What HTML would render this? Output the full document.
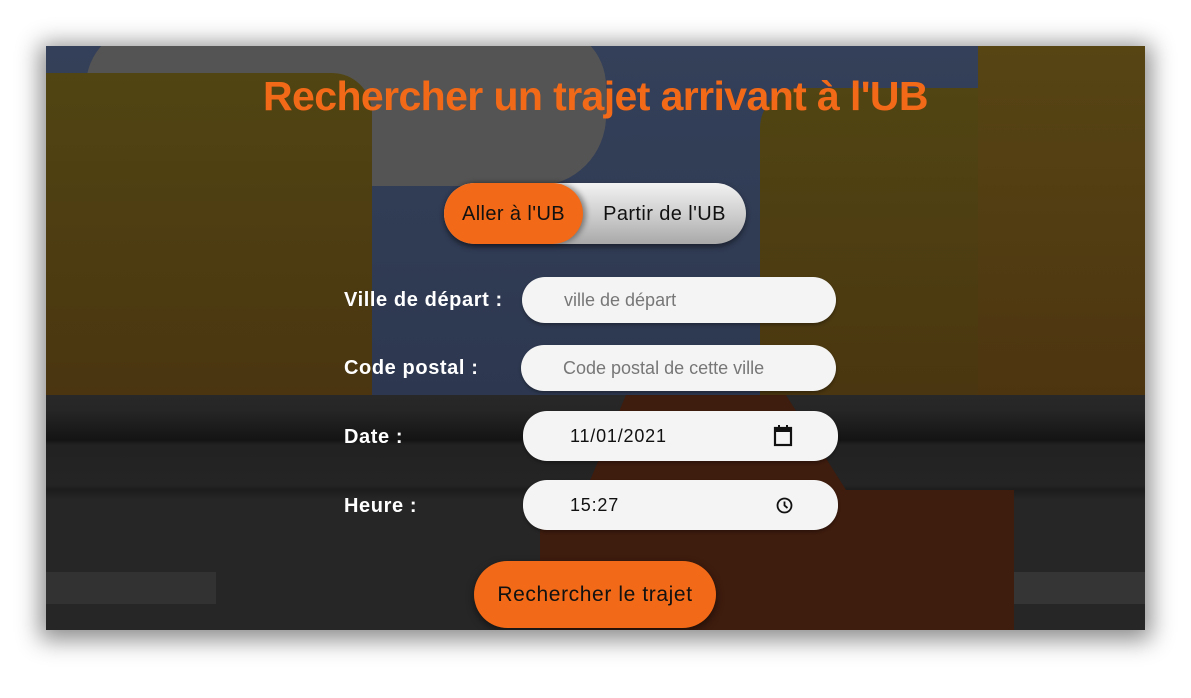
<!DOCTYPE html>
<html><head><meta charset="utf-8"><style>
*{margin:0;padding:0;box-sizing:border-box}
body{width:1191px;height:698px;background:#fff;position:relative;overflow:hidden;font-family:"Liberation Sans",sans-serif}
#p{position:absolute;left:46px;top:46px;width:1099px;height:584px;overflow:hidden;background:#2f3a52;box-shadow:0 4px 22px 6px rgba(0,0,0,.45)}
.a{position:absolute}
.lbl{position:absolute;left:298px;color:#fff;font-size:20px;font-weight:bold;letter-spacing:.6px}
.in{position:absolute;background:#f4f4f4;border-radius:24px;box-shadow:0 2px 3px rgba(0,0,0,.3);font-size:18px}
.ph{color:#777;position:absolute;left:42px}
.val{color:#111;position:absolute;left:47px;letter-spacing:.8px}
</style></head><body>
<div id="p">
 <div class="a" style="left:0;top:0;width:1099px;height:350px;background:linear-gradient(#344059,#2d3850)"></div>
 <div class="a" style="left:40px;top:-20px;width:520px;height:160px;background:#545454;border-radius:60px 60px 70px 60px;"></div>
 <div class="a" style="left:0;top:27px;width:326px;height:323px;background:linear-gradient(#514513,#4a3510);border-radius:0 40px 0 0"></div>
 <div class="a" style="left:714px;top:42px;width:271px;height:308px;background:linear-gradient(#514513,#4a3610);border-radius:40px 40px 0 0"></div>
 <div class="a" style="left:932px;top:0;width:167px;height:350px;background:linear-gradient(#574514,#4d3510)"></div>
 <div class="a" style="left:0;top:349px;width:1099px;height:235px;background:linear-gradient(#282828 0,#262626 15px,#141414 45px,#222 50px,#242424 90px,#1c1c1c 95px,#262626 105px,#262626 100%)"></div>
 <div class="a" style="left:0;top:526px;width:170px;height:32px;background:#323232"></div>
 <div class="a" style="left:968px;top:526px;width:131px;height:32px;background:#353535"></div>
 <svg class="a" style="left:0;top:0" width="1099" height="584"><path d="M580 349 L740 349 L800 444 L968 444 L968 584 L494 584 L494 444 L540 444 Z" fill="#3e1c0e"/></svg>

 <div class="a" style="left:0;top:27px;width:1099px;text-align:center;color:#f26a17;font-size:41px;font-weight:bold;letter-spacing:-.6px">Rechercher un trajet arrivant à l'UB</div>

 <div class="a" style="left:398px;top:137px;width:302px;height:61px;border-radius:31px;background:linear-gradient(#f2f2f2,#c8c8c8 60%,#a9a9a9);box-shadow:0 3px 6px rgba(0,0,0,.45)"></div>
 <div class="a" style="left:398px;top:137px;width:139px;height:61px;border-radius:31px;background:#f26a17;box-shadow:3px 0 6px rgba(0,0,0,.4);color:#111;font-size:20px;line-height:63px;text-align:center;letter-spacing:.4px">Aller à l'UB</div>
 <div class="a" style="left:537px;top:137px;width:163px;height:61px;color:#111;font-size:20px;line-height:63px;text-align:center;letter-spacing:.4px">Partir de l'UB</div>

 <div class="lbl" style="top:243px">Ville de départ :</div>
 <div class="in" style="left:476px;top:231px;width:314px;height:46px;line-height:46px"><span class="ph">ville de départ</span></div>
 <div class="lbl" style="top:311px">Code postal :</div>
 <div class="in" style="left:475px;top:299px;width:315px;height:46px;line-height:46px"><span class="ph">Code postal de cette ville</span></div>
 <div class="lbl" style="top:380px">Date :</div>
 <div class="in" style="left:477px;top:365px;width:315px;height:50px;line-height:50px"><span class="val">11/01/2021</span>
  <svg class="a" style="left:250px;top:14px" width="20" height="22" viewBox="0 0 20 22"><rect x="2" y="3" width="16" height="17" fill="none" stroke="#111" stroke-width="2.2"/><rect x="2" y="3" width="16" height="4" fill="#111"/><rect x="5" y="0" width="2" height="4" fill="#111"/><rect x="13" y="0" width="2" height="4" fill="#111"/></svg></div>
 <div class="lbl" style="top:449px">Heure :</div>
 <div class="in" style="left:477px;top:434px;width:315px;height:50px;line-height:50px"><span class="val">15:27</span>
  <svg class="a" style="left:253px;top:17px" width="17" height="17" viewBox="0 0 17 17"><circle cx="8.5" cy="8.5" r="7" fill="none" stroke="#111" stroke-width="1.8"/><path d="M8.5 4.5V8.5L11.5 11" fill="none" stroke="#111" stroke-width="1.8"/></svg></div>

 <div class="a" style="left:428px;top:515px;width:242px;height:67px;border-radius:34px;background:#f26a17;box-shadow:0 3px 8px rgba(0,0,0,.5);color:#111;font-size:21px;line-height:67px;text-align:center;letter-spacing:.6px">Rechercher le trajet</div>
</div>
</body></html>
